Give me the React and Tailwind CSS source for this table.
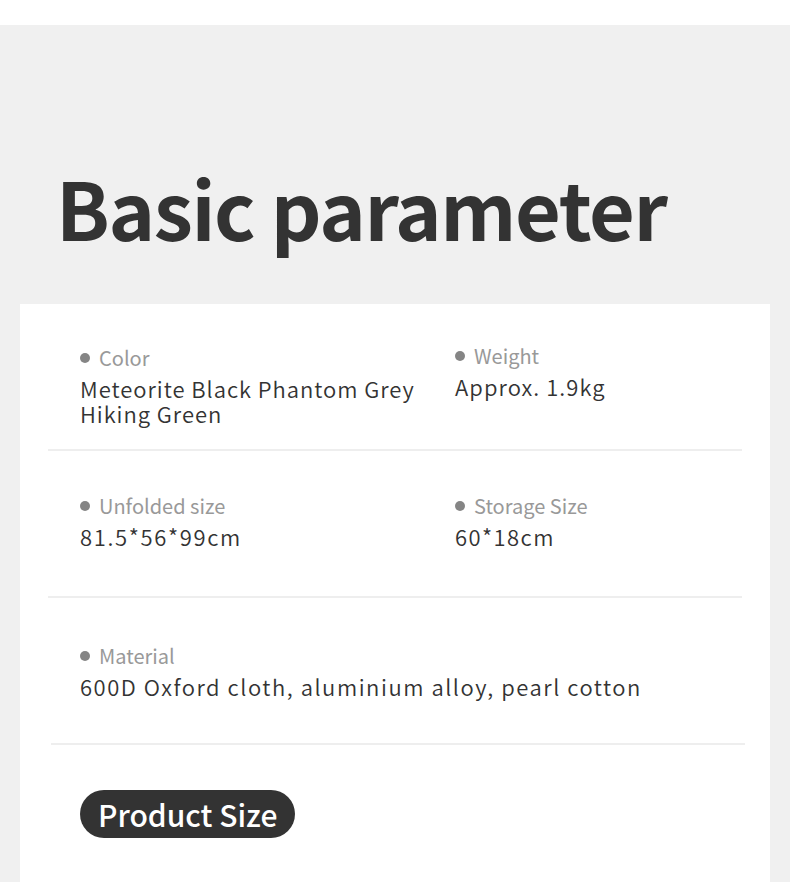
import React from "react";

const font = { fontFamily: '"Noto Sans CJK SC", "Noto Sans", sans-serif' };

function Item({ label, children, className = "", valueClass = "" }) {
  return (
    <div className={"flex flex-col " + className}>
      <div className="flex items-center text-[20px] leading-[24px] text-[#999999]">
        <span className="w-[10px] h-[10px] rounded-full bg-[#858585] mr-[9px] shrink-0" />
        <span>{label}</span>
      </div>
      <div className={"mt-[6px] text-[22px] leading-[24.6px] text-[#333333] font-[350] " + valueClass}>
        {children}
      </div>
    </div>
  );
}

export default function App() {
  return (
    <div className="w-[790px] h-[882px] bg-white overflow-hidden" style={font}>
      <div className="mt-[25px] bg-[#f0f0f0] h-[857px] flex flex-col">
        <h1 className="pt-[142px] pl-[56px] text-[79px] leading-[79px] font-bold text-[#333333] tracking-[-1.4px]">
          Basic parameter
        </h1>
        <div className="mt-[58px] mx-[20px] bg-white flex-1 flex flex-col">
          <div className="h-[145px] pt-[42px] pl-[60px] flex">
            <Item label="Color" className="w-[375px]" valueClass="tracking-[0.96px]">
              Meteorite Black Phantom Grey
              <br />
              Hiking Green
            </Item>
            <Item label="Weight" className="-mt-[2px]" valueClass="tracking-[1.07px]">
              Approx. 1.9kg
            </Item>
          </div>
          <div className="mx-[28px] h-[2px] bg-[#eeeeee]" />
          <div className="h-[145px] pt-[43px] pl-[60px] flex">
            <Item label="Unfolded size" className="w-[375px]" valueClass="tracking-[1.65px]">
              81.5*56*99cm
            </Item>
            <Item label="Storage Size" valueClass="tracking-[1.43px]">60*18cm</Item>
          </div>
          <div className="mx-[28px] h-[2px] bg-[#eeeeee]" />
          <div className="h-[145px] pt-[46px] pl-[60px] flex">
            <Item label="Material" valueClass="tracking-[1.53px]">
              600D Oxford cloth, aluminium alloy, pearl cotton
            </Item>
          </div>
          <div className="ml-[31px] mr-[25px] h-[2px] bg-[#eeeeee]" />
          <div className="pt-[45px] pl-[60px] flex">
            <div className="h-[48px] px-[18px] rounded-full bg-[#333333] text-white text-[30px] font-medium flex items-center leading-none">
              Product Size
            </div>
          </div>
        </div>
      </div>
    </div>
  );
}
